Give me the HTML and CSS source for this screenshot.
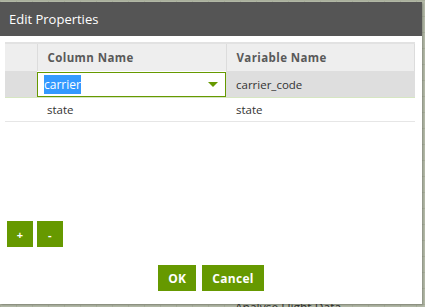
FILE: index.html
```html
<!DOCTYPE html>
<html lang="en">
<head>
    <meta charset="UTF-8">
    <title>Edit Properties</title>
    <link rel="stylesheet" href="styles.css">
</head>
<body>
    <div class="canvas-label">Analyse Flight Data</div>

    <div class="dialog">
        <div class="dialog-header">Edit Properties</div>

        <div class="dialog-body">
            <table class="grid">
                <thead>
                    <tr>
                        <th class="col-index"></th>
                        <th>Column Name</th>
                        <th>Variable Name</th>
                    </tr>
                </thead>
                <tbody>
                    <tr class="selected">
                        <td class="col-index"></td>
                        <td class="editing">
                            <div class="select-box">
                                <span class="select-value">carrier</span>
                                <span class="select-arrow"></span>
                            </div>
                        </td>
                        <td>carrier_code</td>
                    </tr>
                    <tr>
                        <td class="col-index"></td>
                        <td>state</td>
                        <td>state</td>
                    </tr>
                </tbody>
            </table>

            <div class="row-tools">
                <button class="btn btn-square">+</button>
                <button class="btn btn-square">-</button>
            </div>

            <div class="dialog-actions">
                <button class="btn">OK</button>
                <button class="btn">Cancel</button>
            </div>
        </div>
    </div>
</body>
</html>
```

FILE: styles.css
```css
:root {
    --green: #669900;
    --header-bg: #555555;
    --canvas-bg: #b4baa8;
    --grid-line: #a9af9c;
}

* {
    box-sizing: border-box;
    margin: 0;
    padding: 0;
}

body {
    font-family: "Open Sans", "Noto Sans", sans-serif;
    font-size: 11.5px;
    color: #333;
    width: 425px;
    height: 307px;
    overflow: hidden;
    padding-top: 2px;
    position: relative;
    background-color: var(--canvas-bg);
    background-image:
        linear-gradient(to right, var(--grid-line) 1px, transparent 1px),
        linear-gradient(to bottom, var(--grid-line) 1px, transparent 1px);
    background-size: 16px 16px;
}

.canvas-label {
    position: absolute;
    left: 235px;
    top: 299px;
    font-size: 12px;
    color: #333;
}

.dialog {
    position: relative;
    width: 422px;
    height: 302px;
    background: white;
    box-shadow: 1px 1px 2px rgba(0, 0, 0, 0.25);
    display: flex;
    flex-direction: column;
}

.dialog-header {
    height: 34px;
    background-color: var(--header-bg);
    color: white;
    font-size: 13px;
    padding: 8px 0 0 9px;
}

.dialog-body {
    flex: 1;
    display: flex;
    flex-direction: column;
    padding: 6px 7px 0 5px;
}

.grid {
    width: 410px;
    border-collapse: collapse;
    table-layout: fixed;
}

.grid th {
    height: 28px;
    background-color: #eeeeee;
    border-top: 2px solid #e2e2e2;
    border-right: 1px solid #dcdcdc;
    color: #595959;
    font-weight: 700;
    text-align: left;
    padding-left: 10px;
    letter-spacing: 0.4px;
}

.grid th.col-index {
    width: 32px;
    border-right: 1px solid #dcdcdc;
}

.grid th:nth-child(2) {
    width: 189px;
}

.grid td {
    height: 24px;
    padding-left: 10px;
    color: #333;
    border-bottom: 1px solid #e6e6e6;
}

.grid tr.selected td {
    height: 26px;
    background-color: #dedede;
    border-bottom: 1px solid #d6e6c2;
}

.grid td.editing {
    padding: 1px 0 0 0;
    background-color: white !important;
}

.select-box {
    height: 25px;
    border: 1px solid var(--green);
    display: flex;
    align-items: center;
    justify-content: space-between;
    padding: 0 7px 0 6px;
    background: white;
}

.select-value {
    background-color: #3399ff;
    color: white;
    padding: 1px 0;
    font-size: 12px;
}

.select-arrow {
    width: 0;
    height: 0;
    border-left: 5px solid transparent;
    border-right: 5px solid transparent;
    border-top: 5px solid var(--green);
}

.row-tools {
    display: flex;
    gap: 4px;
    margin-top: 99px;
    padding-left: 2px;
}

.btn {
    background-color: var(--green);
    color: white;
    border: none;
    font-family: "Open Sans", "Noto Sans", sans-serif;
    font-weight: 700;
    font-size: 12px;
    height: 26px;
    padding: 0 10px;
    letter-spacing: 0.3px;
}

.btn-square {
    width: 26px;
    padding: 0;
    font-size: 11px;
}

.dialog-actions {
    display: flex;
    justify-content: center;
    gap: 6px;
    margin-top: 18px;
    padding-left: 2px;
}
```
